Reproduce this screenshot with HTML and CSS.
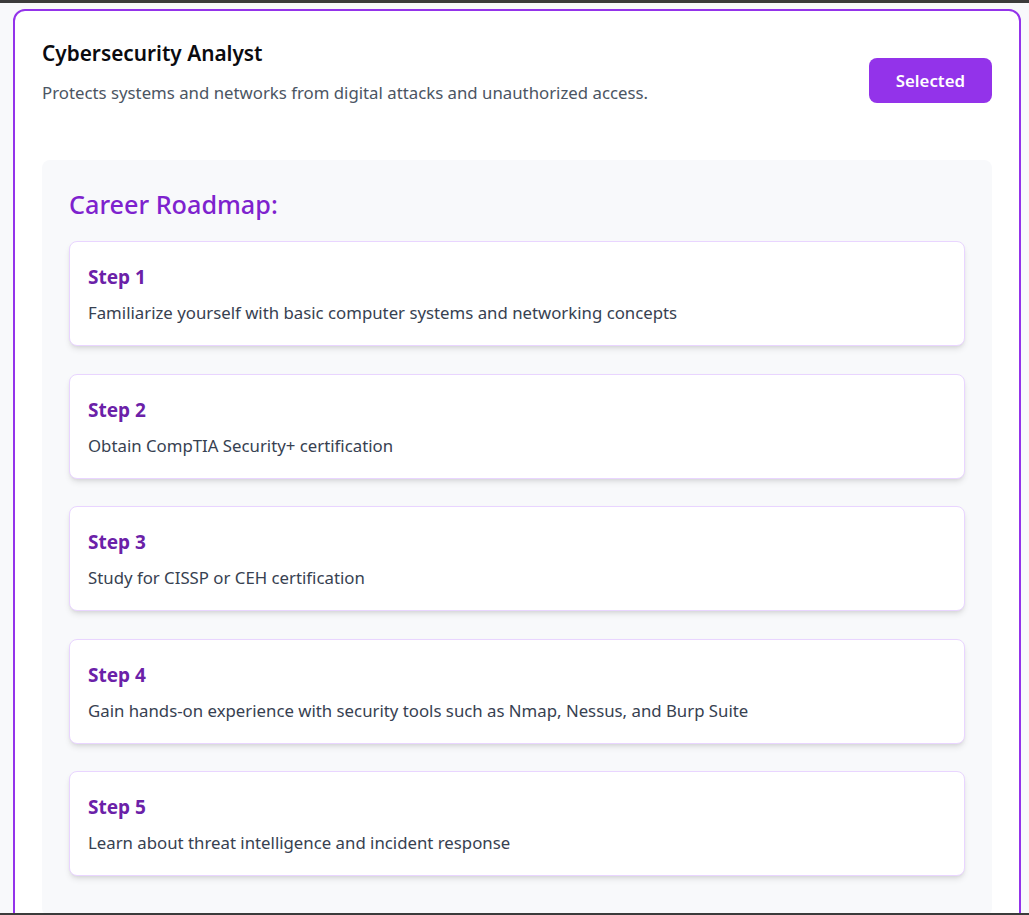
FILE: index.html
```html
<!DOCTYPE html>
<html lang="en">
<head>
<meta charset="utf-8">
<title>Cybersecurity Analyst</title>
<link rel="stylesheet" href="styles.css">
</head>
<body>
<div class="frame">
  <div class="bar-top"></div>
  <main class="page">
    <section class="career-card">
      <header class="career-head">
        <div class="career-info">
          <h1 class="career-title">Cybersecurity Analyst</h1>
          <p class="career-desc">Protects systems and networks from digital attacks and unauthorized access.</p>
        </div>
        <button class="select-btn">Selected</button>
      </header>
      <div class="roadmap">
        <h2 class="roadmap-title">Career Roadmap:</h2>
        <ol class="steps">
          <li class="step">
            <h3 class="step-title">Step 1</h3>
            <p class="step-text">Familiarize yourself with basic computer systems and networking concepts</p>
          </li>
          <li class="step">
            <h3 class="step-title">Step 2</h3>
            <p class="step-text">Obtain CompTIA Security+ certification</p>
          </li>
          <li class="step">
            <h3 class="step-title">Step 3</h3>
            <p class="step-text">Study for CISSP or CEH certification</p>
          </li>
          <li class="step">
            <h3 class="step-title">Step 4</h3>
            <p class="step-text">Gain hands-on experience with security tools such as Nmap, Nessus, and Burp Suite</p>
          </li>
          <li class="step">
            <h3 class="step-title">Step 5</h3>
            <p class="step-text">Learn about threat intelligence and incident response</p>
          </li>
        </ol>
      </div>
    </section>
  </main>
  <div class="bar-bottom"></div>
</div>
</body>
</html>
```

FILE: styles.css
```css
* { box-sizing: border-box; }

html, body {
  margin: 0;
  padding: 0;
  height: 100%;
}

body {
  font-family: "Noto Sans", "Open Sans", sans-serif;
  background: #f8f9fb;
  color: #111827;
}

.frame {
  height: 915px;
  display: flex;
  flex-direction: column;
  overflow: hidden;
}

.bar-top {
  height: 3px;
  flex: 0 0 3px;
  background: #3b3b3b;
}

.bar-bottom {
  height: 2px;
  flex: 0 0 2px;
  background: #3b3b3b;
}

.page {
  flex: 1 1 auto;
  overflow: hidden;
  padding: 6px 8px 0 13px;
}

.career-card {
  background: #ffffff;
  border: 2px solid #9333ea;
  border-radius: 12px;
  padding: 28px 27px 40px 27px;
}

.career-head {
  display: flex;
  justify-content: space-between;
  align-items: flex-start;
}

.career-title {
  margin: 0;
  font-size: 20.8px;
  line-height: 28px;
  font-weight: 600;
  color: #0b0b0f;
}

.career-desc {
  margin: 14px 0 0 0;
  font-size: 16.8px;
  line-height: 24px;
  color: #4b5563;
}

.select-btn {
  margin-top: 19px;
  border: 0;
  border-radius: 8px;
  background: #9333ea;
  color: #ffffff;
  font-family: inherit;
  font-size: 16.8px;
  font-weight: 600;
  line-height: 24px;
  padding: 10.5px 27px;
}

.roadmap {
  margin-top: 55px;
  background: #f8f9fb;
  border-radius: 8px;
  padding: 28px 27px 40px 27px;
}

.roadmap-title {
  margin: 0 0 21px 0;
  font-size: 25.2px;
  line-height: 32px;
  font-weight: 500;
  color: #7e22ce;
}

.steps {
  list-style: none;
  margin: 0;
  padding: 0;
  display: flex;
  flex-direction: column;
  gap: 27.5px;
}

.step {
  background: #ffffff;
  border: 1px solid #e9d5ff;
  border-radius: 8px;
  box-shadow: 0 4px 6px -1px rgba(0, 0, 0, 0.1), 0 2px 4px -2px rgba(0, 0, 0, 0.1);
  padding: 21px 18px 19px 18px;
}

.step-title {
  margin: 0 0 9px 0;
  font-size: 19px;
  line-height: 28px;
  font-weight: 700;
  color: #6b21a8;
}

.step-text {
  margin: 0;
  font-size: 16.8px;
  line-height: 26px;
  color: #374151;
}
```
